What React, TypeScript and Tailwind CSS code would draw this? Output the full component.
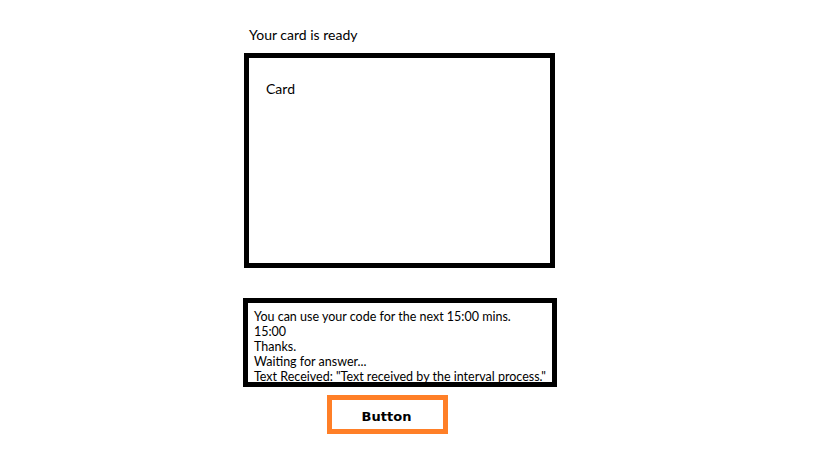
export default function App() {
  return (
    <div className="min-h-[460px] bg-white pl-[244px] pt-[26px] text-black [font-family:Lato,'Open_Sans',sans-serif]">
      <p className="pl-[5px] text-[14px] leading-[18px]">Your card is ready</p>

      <div className="mt-[9px] h-[215px] w-[311px] border-[5px] border-black pl-[17px] pt-[22px]">
        <p className="text-[14px] leading-[18px]">Card</p>
      </div>

      <div className="ml-[-1px] mt-[30px] h-[89px] w-[314px] whitespace-nowrap border-[5px] border-black pl-[6px] pt-[6px] text-[12.5px] leading-[15px]">
        <p>You can use your code for the next 15:00 mins.</p>
        <p>15:00</p>
        <p>Thanks.</p>
        <p>Waiting for answer...</p>
        <p>Text Received: "Text received by the interval process."</p>
      </div>

      <button
        type="button"
        className="ml-[83px] mt-[8px] flex h-[39px] w-[121px] items-center justify-center border-[5px] border-[#ff7f27] bg-white pr-[2px] pt-[4px] text-[13px] font-bold [font-family:'DejaVu_Sans',sans-serif]"
      >
        Button
      </button>
    </div>
  );
}
